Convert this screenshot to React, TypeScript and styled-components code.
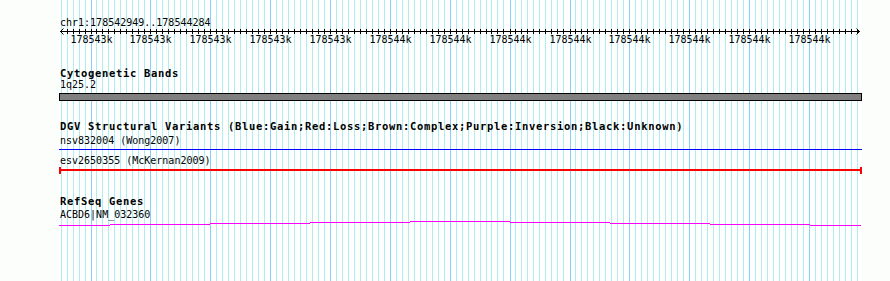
import React from 'react';
import styled, { createGlobalStyle } from 'styled-components';

const LEFT = 59;
const WIDTH = 803;
const MAJOR = [91, 150, 210, 270, 330, 390, 450, 510, 570, 629, 689, 749, 809];
const LABELS = MAJOR.map((x, i) => ({ x, text: i < 5 ? '178543k' : '178544k' }));

// grid + ruler ticks share the same positions: 10 minor steps between majors
const STEPS: { x: number; major: boolean }[] = [];
for (let k = -5; k <= 128; k++) {
	const major = k % 10 === 0;
	const x = major ? MAJOR[k / 10] : Math.round(90.5 + 5.985 * k);
	STEPS.push({ x, major });
}

const gridStops = STEPS.map(({ x, major }) => {
	const p = x - LEFT;
	const c = major ? '#87cefa' : '#afeeee';
	return `transparent ${p}px, ${c} ${p}px ${p + 1}px, transparent ${p + 1}px`;
}).join(', ');

const GENE = [
	{ from: 59, to: 110, row: 5 },
	{ from: 110, to: 210, row: 4 },
	{ from: 210, to: 310, row: 3 },
	{ from: 310, to: 410, row: 2 },
	{ from: 410, to: 510, row: 1 },
	{ from: 510, to: 610, row: 2 },
	{ from: 610, to: 710, row: 3 },
	{ from: 710, to: 810, row: 4 },
	{ from: 810, to: 861, row: 5 },
];

const GlobalStyle = createGlobalStyle`
	html, body {
		margin: 0;
		padding: 0;
		background: #fcfefc;
	}
	body {
		font-family: "DejaVu Sans Mono", "Liberation Mono", monospace;
		color: #000;
	}
`;

const Page = styled.div`
	display: flex;
	height: 281px;
	padding-left: ${LEFT}px;
	overflow: hidden;
`;

const Panel = styled.div`
	width: ${WIDTH}px;
	height: 281px;
	box-sizing: border-box;
	padding-top: 17px;
	background-color: #fff;
	background-image: linear-gradient(to right, ${gridStops});
`;

const Position = styled.div`
	padding-left: 1px;
	font-size: 10px;
	line-height: 11px;
	white-space: nowrap;
`;

const TrackTitle = styled.div<{ $gap: number }>`
	margin-top: ${(p) => p.$gap}px;
	padding-left: 1px;
	font-size: 10.5px;
	font-weight: bold;
	letter-spacing: 0.68px;
	line-height: 11px;
	white-space: nowrap;
`;

const FeatureLabel = styled.div<{ $gap?: number }>`
	margin-top: ${(p) => p.$gap || 0}px;
	padding-left: 1px;
	font-size: 10px;
	line-height: 11px;
	white-space: nowrap;
`;

const BandBar = styled.div`
	margin-top: 3px;
	height: 8px;
	box-sizing: border-box;
	border: 1px solid #000;
	background: #808080;
`;

const SpanLine = styled.div<{ $color: string }>`
	margin-top: 3px;
	height: 1px;
	background: ${(p) => p.$color};
`;

const CappedLine = styled.div<{ $color: string }>`
	margin-top: 1px;
	height: 7px;
	box-sizing: border-box;
	border-left: 2px solid ${(p) => p.$color};
	border-right: 2px solid ${(p) => p.$color};
	background: linear-gradient(${(p) => p.$color}, ${(p) => p.$color}) 0 2px / 100% 2px no-repeat;
`;

const RulerSvg = styled.svg`
	display: block;
	font-family: "DejaVu Sans Mono", "Liberation Mono", monospace;
	font-size: 10px;
`;

const Ruler = () => (
	<RulerSvg width={WIDTH} height={18} shapeRendering="crispEdges">
		<rect x={1} y={3} width={800} height={1} fill="#000" />
		<path d="M4.5 0.5 L1.5 3.5 L4.5 6.5" fill="none" stroke="#000" shapeRendering="auto" />
		<path d="M797.5 0.5 L800.5 3.5 L797.5 6.5" fill="none" stroke="#000" shapeRendering="auto" />
		{STEPS.filter((s) => s.x > 62 && s.x < 858).map((s) => (
			<rect key={s.x} x={s.x - LEFT} y={1} width={1} height={5} fill="#000" />
		))}
		{LABELS.map((l) => (
			<text key={l.x} x={l.x - LEFT + 0.5} y={15} textAnchor="middle" fill="#000">
				{l.text}
			</text>
		))}
	</RulerSvg>
);

const GeneGlyph = () => (
	<svg width={WIDTH} height={6} style={{ display: 'block' }} shapeRendering="crispEdges">
		{GENE.map((g) => (
			<rect key={g.from} x={g.from - LEFT} y={g.row} width={g.to - g.from} height={1} fill="#ff00ff" />
		))}
	</svg>
);

const App = () => (
	<>
		<GlobalStyle />
		<Page>
			<Panel>
				<Position>chr1:178542949..178544284</Position>
				<Ruler />

				<TrackTitle $gap={22}>Cytogenetic Bands</TrackTitle>
				<FeatureLabel>1q25.2</FeatureLabel>
				<BandBar />

				<TrackTitle $gap={20}>
					DGV Structural Variants (Blue:Gain;Red:Loss;Brown:Complex;Purple:Inversion;Black:Unknown)
				</TrackTitle>
				<FeatureLabel $gap={3}>nsv832004 (Wong2007)</FeatureLabel>
				<SpanLine $color="#0000ff" />
				<FeatureLabel $gap={5}>esv2650355 (McKernan2009)</FeatureLabel>
				<CappedLine $color="#ff0000" />

				<TrackTitle $gap={22}>RefSeq Genes</TrackTitle>
				<FeatureLabel $gap={2}>ACBD6|NM_032360</FeatureLabel>
				<GeneGlyph />
			</Panel>
		</Page>
	</>
);

export default App;
